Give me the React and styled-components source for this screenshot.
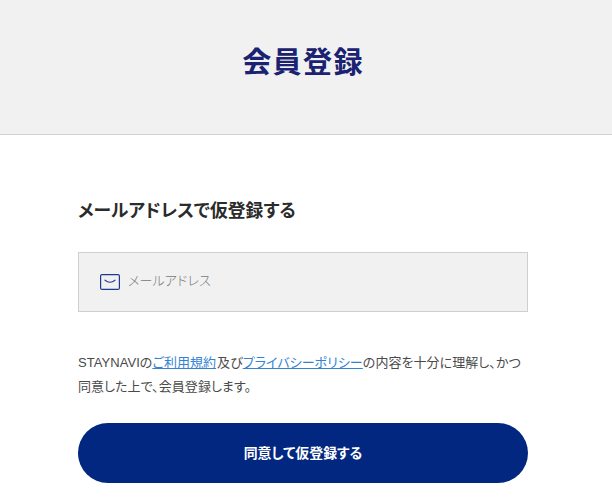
import React from "react";
import styled, { createGlobalStyle } from "styled-components";

const GlobalStyle = createGlobalStyle`
  html, body {
    margin: 0;
    padding: 0;
    background: #fff;
    overflow: hidden;
    font-family: "Liberation Sans", "Noto Sans CJK JP", sans-serif;
    font-feature-settings: "palt";
  }
`;

const Header = styled.header`
  height: 134px;
  padding-right: 6px;
  background: #f1f1f1;
  border-bottom: 1px solid #d2d2d2;
  display: flex;
  justify-content: center;
`;

const PageTitle = styled.h1`
  margin: 43px 0 0;
  font-size: 29px;
  line-height: 40px;
  font-weight: 700;
  letter-spacing: 1.4px;
  color: #1a2271;
`;

const Page = styled.div`
  padding-right: 6px;
`;

const Main = styled.main`
  width: 450px;
  margin: 0 auto;
  padding-top: 64px;
`;

const SectionTitle = styled.h2`
  margin: 0 0 29px;
  font-size: 17.8px;
  line-height: 24px;
  font-weight: 700;
  color: #2b2b2b;
`;

const MailField = styled.label`
  box-sizing: border-box;
  height: 60px;
  display: flex;
  align-items: center;
  gap: 8px;
  padding: 0 21px;
  background: #f1f1f1;
  border: 1px solid #cfcfcf;
`;

const MailInput = styled.input`
  flex: 1;
  border: 0;
  outline: 0;
  padding: 0 0 4px;
  background: transparent;
  font-family: inherit;
  font-feature-settings: inherit;
  font-size: 13px;
  letter-spacing: 0.15px;
  font-weight: 300;
  &::placeholder {
    color: #787878;
    opacity: 1;
  }
`;

const Terms = styled.p`
  margin: 39px 0 0;
  font-size: 13px;
  line-height: 24px;
  letter-spacing: 0.05px;
  color: #4a4a4a;
`;

const TermsLink = styled.a`
  color: #3483d2;
  text-decoration: underline;
  margin-right: ${(props) => (props.$spaced ? "1px" : "0")};
`;

const SubmitButton = styled.button`
  display: block;
  width: 100%;
  height: 60px;
  margin-top: 24px;
  padding: 0 0 2px;
  border: 0;
  border-radius: 30px;
  background: #022781;
  color: #fff;
  font-family: inherit;
  font-feature-settings: inherit;
  font-size: 13.9px;
  font-weight: 700;
`;

const MailIcon = () => (
  <svg width="20" height="16" viewBox="0 0 20 16" fill="none">
    <rect x="0.6" y="0.6" width="18.8" height="14.8" rx="1.5" stroke="#1f3a8c" strokeWidth="1.2" />
    <path d="M5 6.2c1.6 1.3 3.2 2 5 2s3.4-.7 5-2" stroke="#1f3a8c" strokeWidth="1.1" strokeLinecap="round" />
  </svg>
);

const App = () => {
  return (
    <>
      <GlobalStyle />
      <Header>
        <PageTitle>会員登録</PageTitle>
      </Header>
      <Page>
        <Main>
          <SectionTitle>メールアドレスで仮登録する</SectionTitle>
          <MailField>
            <MailIcon />
            <MailInput placeholder="メールアドレス" />
          </MailField>
          <Terms>
            STAYNAVIの<TermsLink href="#" $spaced>ご利用規約</TermsLink>及び
            <TermsLink href="#">プライバシーポリシー</TermsLink>
            の内容を十分に理解し、かつ同意した上で、会員登録します。
          </Terms>
          <SubmitButton>同意して仮登録する</SubmitButton>
        </Main>
      </Page>
    </>
  );
};

export default App;
